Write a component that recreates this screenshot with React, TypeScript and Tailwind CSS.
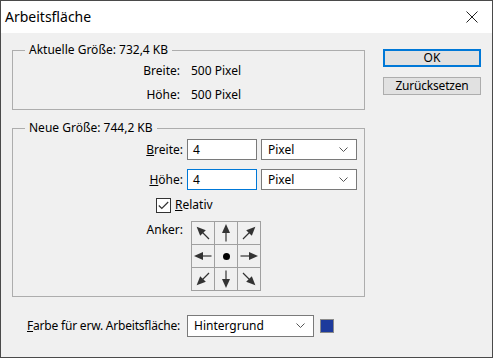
import React from "react";

// Arrow drawn pointing up, rotated per anchor cell
const Arrow = ({ angle }: { angle: number }) => (
  <svg width="22" height="22" viewBox="0 0 22 22">
    <g transform={`rotate(${angle} 11 11)`} fill="#333" stroke="#333">
      <line x1="11" y1="10" x2="11" y2="19.5" strokeWidth="1.2" />
      <polygon points="11,2 7,11 15,11" stroke="none" />
    </g>
  </svg>
);

const Chevron = () => (
  <svg width="9" height="6" viewBox="0 0 9 6" className="shrink-0">
    <polyline points="0.5,0.5 4.5,4.5 8.5,0.5" fill="none" stroke="#555" strokeWidth="1" />
  </svg>
);

const Select = ({ value, className }: { value: string; className: string }) => (
  <div
    className={`flex items-center justify-between bg-white border border-[#7a7a7a] pl-[6px] pr-[8px] ${className}`}
  >
    <span>{value}</span>
    <Chevron />
  </div>
);

const ANCHORS = [-45, 0, 45, -90, null, 90, -135, 180, 135];

export default function App() {
  return (
    <div
      className="w-[493px] h-[358px] border border-[#4a4a4a] bg-[#f0f0f0] text-[12px] leading-[16px] text-black flex flex-col"
      style={{ fontFamily: '"Noto Sans", "Open Sans", sans-serif' }}
    >
      <div className="h-[32px] bg-white flex items-center justify-between pl-[4px] pr-[14px] shrink-0">
        <span className="text-[14px]">Arbeitsfläche</span>
        <svg width="12" height="12" viewBox="0 0 12 12">
          <path d="M0.5 0.5 L11.5 11.5 M11.5 0.5 L0.5 11.5" stroke="#222" strokeWidth="1" />
        </svg>
      </div>

      <div className="flex pt-[9px] pl-[11px]">
        <div className="w-[353px] flex flex-col">
          <fieldset className="border border-[#adadad] h-[68px] px-0 pt-[5px]">
            <legend className="ml-[12px] px-[4px]">Aktuelle Größe: 732,4 KB</legend>
            <div className="grid grid-cols-[167px_auto] gap-x-[11px] gap-y-[8px]">
              <span className="text-right">Breite:</span>
              <span>500 Pixel</span>
              <span className="text-right">Höhe:</span>
              <span>500 Pixel</span>
            </div>
          </fieldset>

          <fieldset className="mt-[10px] border border-[#adadad] h-[177px] px-0 pt-[3px]">
            <legend className="ml-[12px] px-[4px]">Neue Größe: 744,2 KB</legend>
            <div className="flex items-center">
              <span className="w-[170px] text-right">
                <u>B</u>reite:
              </span>
              <div className="ml-[4px] w-[70px] h-[21px] bg-white border border-[#7a7a7a] pl-[5px] flex items-center">
                4
              </div>
              <Select value="Pixel" className="ml-[4px] w-[96px] h-[21px]" />
            </div>
            <div className="flex items-center mt-[9px]">
              <span className="w-[170px] text-right">
                <u>H</u>öhe:
              </span>
              <div className="ml-[4px] w-[70px] h-[21px] bg-white border border-[#0078d7] pl-[5px] flex items-center">
                4
              </div>
              <Select value="Pixel" className="ml-[4px] w-[96px] h-[21px]" />
            </div>
            <div className="flex items-center mt-[7px] ml-[143px]">
              <div className="w-[15px] h-[15px] border border-[#333] bg-white flex items-center justify-center">
                <svg width="11" height="9" viewBox="0 0 11 9">
                  <polyline points="0.8,4.5 3.8,7.5 10.2,1" fill="none" stroke="#333" strokeWidth="1.2" />
                </svg>
              </div>
              <span className="ml-[4px]">
                <u>R</u>elativ
              </span>
            </div>
            <div className="flex items-start mt-[8px]">
              <span className="w-[170px] text-right pt-[1px]">Anker:</span>
              <div className="ml-[8px] grid grid-cols-[22px_22px_22px] grid-rows-[22px_22px_22px] gap-px p-px bg-[#a0a0a0]">
                {ANCHORS.map((a, i) => (
                  <div key={i} className="bg-[#f0f0f0] flex items-center justify-center">
                    {a === null ? (
                      <div className="w-[7px] h-[7px] rounded-full bg-black" />
                    ) : (
                      <Arrow angle={a} />
                    )}
                  </div>
                ))}
              </div>
            </div>
          </fieldset>

          <div className="flex items-center mt-[18px] pl-[15px]">
            <span className="w-[156px] shrink-0 whitespace-nowrap tracking-[-0.2px]">
              <u>F</u>arbe für erw. Arbeitsfläche:
            </span>
            <Select value="Hintergrund" className="ml-[4px] w-[127px] h-[22px] shrink-0" />
            <div className="ml-[6px] w-[14px] h-[14px] bg-[#1d3a9c] border border-[#8a8a8a] shrink-0" />
          </div>
        </div>

        <div className="ml-[18px] flex flex-col mt-[7px]">
          <button className="w-[98px] h-[18px] bg-[#e1e1e1] border-2 border-[#0078d7] flex items-center justify-center">
            OK
          </button>
          <button className="mt-[10px] w-[98px] h-[18px] bg-[#e1e1e1] border border-[#adadad] flex items-center justify-center tracking-[-0.2px]">
            Zurücksetzen
          </button>
        </div>
      </div>
    </div>
  );
}
